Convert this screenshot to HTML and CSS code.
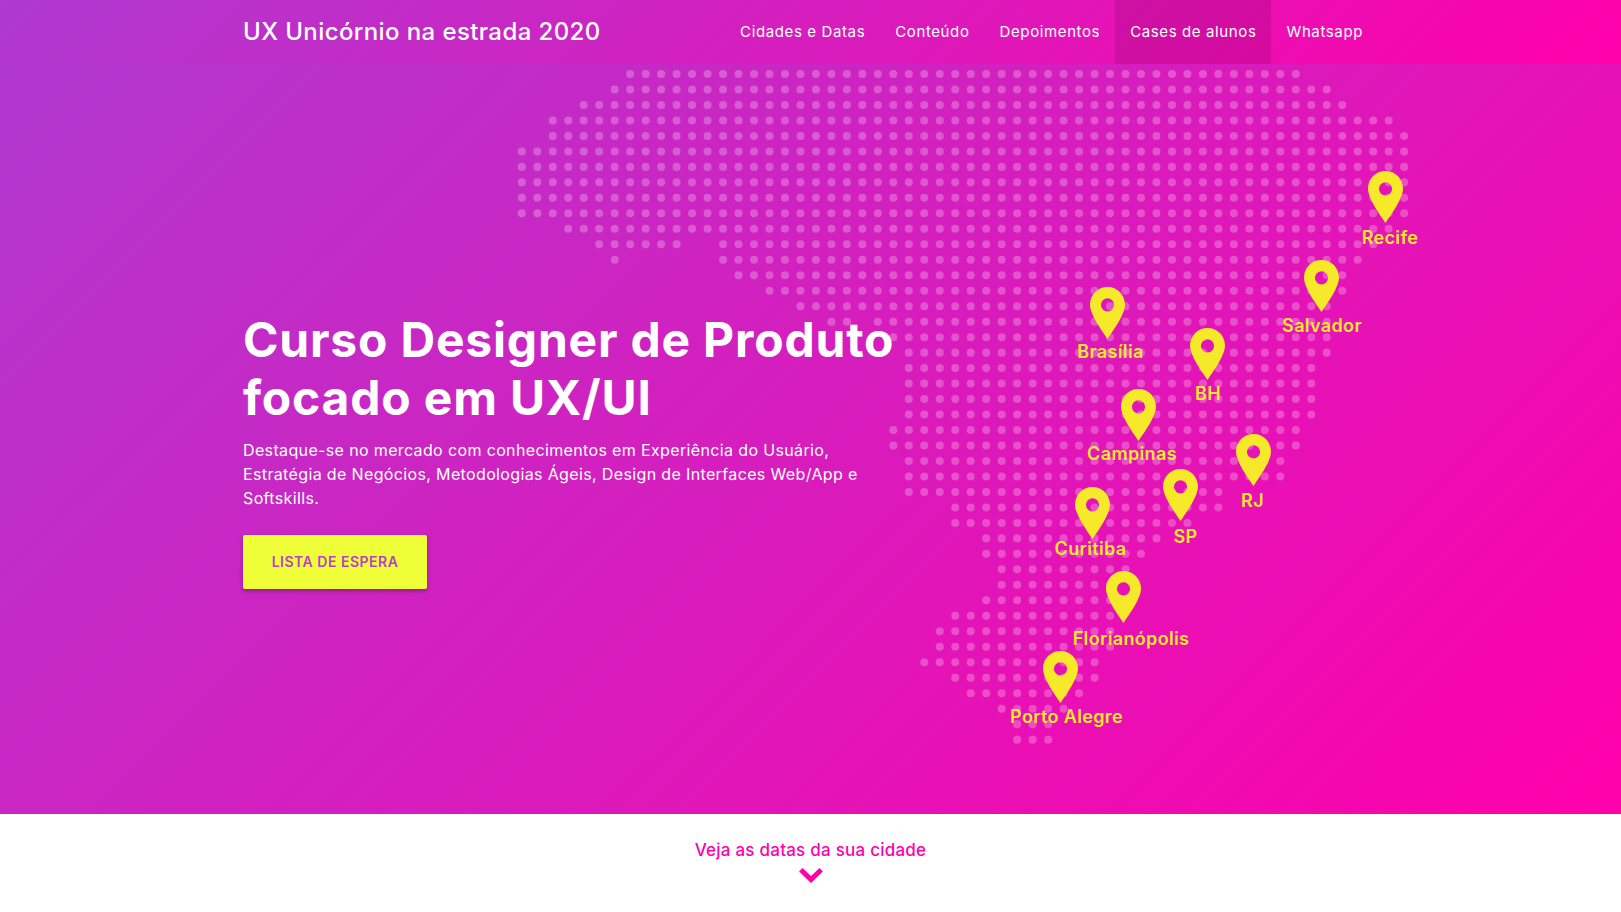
FILE: index.html
```html
<!DOCTYPE html>
<html lang="pt-BR">
<head>
<meta charset="utf-8">
<title>UX Unicórnio na estrada 2020</title>
<link rel="stylesheet" href="styles.css">
</head>
<body>
<section class="hero">
  <header class="topbar">
    <div class="container topbar-inner">
      <a class="brand" href="#">UX Unicórnio na estrada 2020</a>
      <nav class="nav">
        <a class="nav-link" href="#">Cidades e Datas</a>
        <a class="nav-link" href="#">Conteúdo</a>
        <a class="nav-link" href="#">Depoimentos</a>
        <a class="nav-link is-active" href="#">Cases de alunos</a>
        <a class="nav-link" href="#">Whatsapp</a>
      </nav>
    </div>
  </header>

  <div class="map">
    <svg class="dots" viewBox="-0.504 -0.517 58.527 44.51" aria-hidden="true">
      <path class="dots-path" d="M7 0H50.1M6 1H52.1M4 2H53.1M2 3H56.1M2 4H57.1M0 5H57.1M0 6H57.1M0 7H57.1M0 8H57.1M0 9H57.1M3 10H56.1M5 11H10.1M13 11H55.1M6 12H6.1M13 12H54.1M14 13H53.1M16 14H53.1M18 15H52.1M20 16H21.1M23 16H52.1M24 17H52.1M25 18H52.1M25 19H51.1M25 20H51.1M25 21H51.1M25 22H51.1M24 23H50.1M24 24H50.1M25 25H49.1M25 26H49.1M25 27H45.1M28 28H45.1M28 29H43.1M30 30H41.1M30 31H40.1M31 32H39.1M31 33H38.1M30 34H38.1M28 35H38.1M27 36H38.1M27 37H38.1M26 38H37.1M28 39H37.1M29 40H36.1M31 41H35.1M32 42H34.1M32 43H34.1"/>
    </svg>

    <svg class="pin pin-recife" viewBox="0 0 35 52" aria-hidden="true"><path class="pin-shape" d="M17.5 0C7.8 0 0 7.8 0 17.5C0 27.5 11.5 43 17.5 52C23.5 43 35 27.5 35 17.5C35 7.8 27.2 0 17.5 0ZM17.5 11.2A6.6 6.6 0 1 1 17.5 24.4A6.6 6.6 0 1 1 17.5 11.2Z"/></svg>
    <span class="pin-label label-recife">Recife</span>

    <svg class="pin pin-salvador" viewBox="0 0 35 52" aria-hidden="true"><path class="pin-shape" d="M17.5 0C7.8 0 0 7.8 0 17.5C0 27.5 11.5 43 17.5 52C23.5 43 35 27.5 35 17.5C35 7.8 27.2 0 17.5 0ZM17.5 11.2A6.6 6.6 0 1 1 17.5 24.4A6.6 6.6 0 1 1 17.5 11.2Z"/></svg>
    <span class="pin-label label-salvador">Salvador</span>

    <svg class="pin pin-brasilia" viewBox="0 0 35 52" aria-hidden="true"><path class="pin-shape" d="M17.5 0C7.8 0 0 7.8 0 17.5C0 27.5 11.5 43 17.5 52C23.5 43 35 27.5 35 17.5C35 7.8 27.2 0 17.5 0ZM17.5 11.2A6.6 6.6 0 1 1 17.5 24.4A6.6 6.6 0 1 1 17.5 11.2Z"/></svg>
    <span class="pin-label label-brasilia">Brasília</span>

    <svg class="pin pin-bh" viewBox="0 0 35 52" aria-hidden="true"><path class="pin-shape" d="M17.5 0C7.8 0 0 7.8 0 17.5C0 27.5 11.5 43 17.5 52C23.5 43 35 27.5 35 17.5C35 7.8 27.2 0 17.5 0ZM17.5 11.2A6.6 6.6 0 1 1 17.5 24.4A6.6 6.6 0 1 1 17.5 11.2Z"/></svg>
    <span class="pin-label label-bh">BH</span>

    <svg class="pin pin-campinas" viewBox="0 0 35 52" aria-hidden="true"><path class="pin-shape" d="M17.5 0C7.8 0 0 7.8 0 17.5C0 27.5 11.5 43 17.5 52C23.5 43 35 27.5 35 17.5C35 7.8 27.2 0 17.5 0ZM17.5 11.2A6.6 6.6 0 1 1 17.5 24.4A6.6 6.6 0 1 1 17.5 11.2Z"/></svg>
    <span class="pin-label label-campinas">Campinas</span>

    <svg class="pin pin-rj" viewBox="0 0 35 52" aria-hidden="true"><path class="pin-shape" d="M17.5 0C7.8 0 0 7.8 0 17.5C0 27.5 11.5 43 17.5 52C23.5 43 35 27.5 35 17.5C35 7.8 27.2 0 17.5 0ZM17.5 11.2A6.6 6.6 0 1 1 17.5 24.4A6.6 6.6 0 1 1 17.5 11.2Z"/></svg>
    <span class="pin-label label-rj">RJ</span>

    <svg class="pin pin-sp" viewBox="0 0 35 52" aria-hidden="true"><path class="pin-shape" d="M17.5 0C7.8 0 0 7.8 0 17.5C0 27.5 11.5 43 17.5 52C23.5 43 35 27.5 35 17.5C35 7.8 27.2 0 17.5 0ZM17.5 11.2A6.6 6.6 0 1 1 17.5 24.4A6.6 6.6 0 1 1 17.5 11.2Z"/></svg>
    <span class="pin-label label-sp">SP</span>

    <svg class="pin pin-curitiba" viewBox="0 0 35 52" aria-hidden="true"><path class="pin-shape" d="M17.5 0C7.8 0 0 7.8 0 17.5C0 27.5 11.5 43 17.5 52C23.5 43 35 27.5 35 17.5C35 7.8 27.2 0 17.5 0ZM17.5 11.2A6.6 6.6 0 1 1 17.5 24.4A6.6 6.6 0 1 1 17.5 11.2Z"/></svg>
    <span class="pin-label label-curitiba">Curitiba</span>

    <svg class="pin pin-floripa" viewBox="0 0 35 52" aria-hidden="true"><path class="pin-shape" d="M17.5 0C7.8 0 0 7.8 0 17.5C0 27.5 11.5 43 17.5 52C23.5 43 35 27.5 35 17.5C35 7.8 27.2 0 17.5 0ZM17.5 11.2A6.6 6.6 0 1 1 17.5 24.4A6.6 6.6 0 1 1 17.5 11.2Z"/></svg>
    <span class="pin-label label-floripa">Florianópolis</span>

    <svg class="pin pin-poa" viewBox="0 0 35 52" aria-hidden="true"><path class="pin-shape" d="M17.5 0C7.8 0 0 7.8 0 17.5C0 27.5 11.5 43 17.5 52C23.5 43 35 27.5 35 17.5C35 7.8 27.2 0 17.5 0ZM17.5 11.2A6.6 6.6 0 1 1 17.5 24.4A6.6 6.6 0 1 1 17.5 11.2Z"/></svg>
    <span class="pin-label label-poa">Porto Alegre</span>
  </div>

  <div class="container hero-copy">
    <h1 class="hero-title">Curso Designer de Produto<br>focado em UX/UI</h1>
    <p class="hero-text">Destaque-se no mercado com conhecimentos em Experiência do Usuário,<br>Estratégia de Negócios, Metodologias Ágeis, Design de Interfaces Web/App e<br>Softskills.</p>
    <a class="cta" href="#">LISTA DE ESPERA</a>
  </div>
</section>

<section class="next">
  <a class="next-link" href="#">Veja as datas da sua cidade</a>
  <svg class="chevron" viewBox="0 0 24 16" aria-hidden="true"><path class="chevron-path" d="M1.8 1.8L12 11.5L22.2 1.8"/></svg>
</section>
</body>
</html>
```
FILE: styles.css
```css
* { box-sizing: border-box; }

html, body { margin: 0; padding: 0; }

body {
  background: #fff;
  font-family: "Inter", "Liberation Sans", sans-serif;
  color: #fff;
}

a { color: inherit; text-decoration: none; }

.container {
  width: 1135px;
  margin: 0 auto;
}

.hero {
  position: relative;
  height: 814px;
  background: linear-gradient(135deg, #ae3ad0 0%, #ff00aa 100%);
  overflow: hidden;
}

.topbar {
  position: relative;
  z-index: 2;
  height: 64px;
  background: linear-gradient(135deg, #ae3ad0 0%, #ff00aa 100%);
}

.topbar-inner {
  display: flex;
  align-items: stretch;
  justify-content: space-between;
  height: 100%;
}

.brand {
  display: flex;
  align-items: center;
  padding-bottom: 1px;
  font-size: 24px;
  font-weight: 500;
  letter-spacing: 0.4px;
}

.nav { display: flex; align-items: stretch; }

.nav-link {
  display: flex;
  align-items: center;
  padding: 0 15px 1px;
  font-size: 15px;
  font-weight: 400;
  letter-spacing: 0.62px;
}

.nav-link.is-active { background: rgba(0, 0, 0, 0.1); }

.map {
  position: absolute;
  inset: 0;
}

.dots {
  position: absolute;
  left: 514px;
  top: 66px;
  width: 906px;
  height: 689px;
}

.dots-path {
  fill: none;
  stroke: rgba(255, 255, 255, 0.25);
  stroke-width: 0.52;
  stroke-linecap: round;
  stroke-dasharray: 0 1;
}

.pin {
  position: absolute;
  width: 35px;
  height: 52px;
  margin-left: -17.5px;
}

.pin-shape { fill: #f5e92a; fill-rule: evenodd; }

.pin-label {
  position: absolute;
  transform: translateX(-50%);
  font-size: 18px;
  line-height: 20px;
  font-weight: 600;
  letter-spacing: 0.35px;
  color: #f5e92a;
  white-space: nowrap;
}

.pin-recife { left: 1385.5px; top: 171px; }
.pin-salvador { left: 1321.5px; top: 260px; }
.pin-brasilia { left: 1107.5px; top: 287px; }
.pin-bh { left: 1207px; top: 328px; }
.pin-campinas { left: 1138px; top: 389px; }
.pin-rj { left: 1253.5px; top: 434px; }
.pin-sp { left: 1180.5px; top: 469px; }
.pin-curitiba { left: 1092.5px; top: 487px; }
.pin-floripa { left: 1123px; top: 571px; }
.pin-poa { left: 1060.5px; top: 651px; }

.label-recife { left: 1390px; top: 228px; }
.label-salvador { left: 1322px; top: 316px; }
.label-brasilia { left: 1110.5px; top: 342px; }
.label-bh { left: 1208px; top: 384px; }
.label-campinas { left: 1132px; top: 444px; }
.label-rj { left: 1252.5px; top: 491px; }
.label-sp { left: 1185.5px; top: 527px; }
.label-curitiba { left: 1090.5px; top: 539px; }
.label-floripa { left: 1131px; top: 629px; }
.label-poa { left: 1066.5px; top: 707px; }

.hero-copy {
  position: relative;
  z-index: 1;
  padding-top: 247px;
}

.hero-title {
  margin: 0 0 11px;
  font-size: 48px;
  line-height: 58px;
  font-weight: 700;
  letter-spacing: 0.8px;
}

.hero-text {
  margin: 0 0 25px;
  font-size: 16px;
  line-height: 24px;
  font-weight: 400;
  letter-spacing: 0.36px;
}

.cta {
  display: flex;
  align-items: center;
  justify-content: center;
  width: 184px;
  height: 54px;
  padding-bottom: 1px;
  border-radius: 2px;
  background: #eeff38;
  color: #b83fc8;
  font-size: 14px;
  font-weight: 600;
  letter-spacing: 0.5px;
  box-shadow: 0 2px 4px rgba(0, 0, 0, 0.3);
}

.next {
  display: flex;
  flex-direction: column;
  align-items: center;
  height: 98px;
  padding-top: 24px;
}

.next-link {
  font-size: 17px;
  line-height: 24px;
  font-weight: 500;
  letter-spacing: 0.23px;
  color: #ff00aa;
}

.chevron {
  width: 24px;
  height: 16px;
  margin-top: 6px;
}

.chevron-path {
  fill: none;
  stroke: #ff00aa;
  stroke-width: 5;
}
```
